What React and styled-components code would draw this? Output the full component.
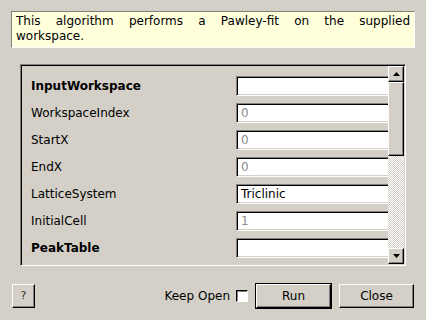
import React from "react";
import styled, { createGlobalStyle } from "styled-components";

const Global = createGlobalStyle`
  html, body { margin: 0; padding: 0; background: #d4d0c8; }
  body { font-family: "DejaVu Sans", "Liberation Sans", sans-serif; font-size: 12px; color: #000; }
  * { box-sizing: border-box; }
`;

const Dialog = styled.div`
  width: 426px;
  height: 320px;
  padding: 11px;
  display: flex;
  flex-direction: column;
  background: #d4d0c8;
`;

const Description = styled.div`
  height: 37px;
  padding: 2px 4px 0 4px;
  background: #ffffdc;
  border: 1px solid;
  border-color: #808080 #ffffff #ffffff #808080;
  line-height: 15px;
`;

const Line = styled.span`
  display: block;
  text-align: ${(p) => (p.$justify ? "justify" : "left")};
  text-align-last: ${(p) => (p.$justify ? "justify" : "auto")};
`;

const Frame = styled.div`
  margin: 16px 9px 0 9px;
  height: 203px;
  display: flex;
  border: 1px solid;
  border-color: #808080 #ffffff #ffffff #808080;
  box-shadow: inset 1px 1px #000000, inset -1px -1px #d4d0c8;
  padding: 1px;
`;

const Viewport = styled.div`
  flex: 1;
  overflow: hidden;
`;

const Grid = styled.div`
  width: 400px;
  padding: 10px 0 0 9px;
  display: grid;
  grid-template-columns: 205px 1fr;
  grid-auto-rows: 20px;
  row-gap: 7px;
  align-items: center;
`;

const Label = styled.div`
  font-weight: ${(p) => (p.$bold ? "bold" : "normal")};
  white-space: nowrap;
`;

const Field = styled.div`
  height: 20px;
  background: #fff;
  border: 1px solid;
  border-color: #808080 #ffffff #ffffff #808080;
  box-shadow: inset 1px 1px #000000, inset -1px -1px #d4d0c8;
  padding: 0 4px;
  display: flex;
  align-items: center;
  color: ${(p) => (p.$placeholder ? "#8c8c8c" : "#000")};
  white-space: nowrap;
`;

const ScrollBar = styled.div`
  width: 16px;
  display: flex;
  flex-direction: column;
  background: repeating-conic-gradient(#d4d0c8 0 25%, #ffffff 0 50%) 0 0 / 2px 2px;
`;

const Raised = styled.div`
  background: #d4d0c8;
  border: 1px solid;
  border-color: #ffffff #000000 #000000 #ffffff;
  box-shadow: inset -1px -1px #808080;
`;

const ArrowButton = styled(Raised)`
  height: 16px;
  display: flex;
  align-items: center;
  justify-content: center;
`;

const Handle = styled(Raised)`
  height: 74px;
`;

const Track = styled.div`
  flex: 1;
`;

const BottomBar = styled.div`
  margin-top: 16px;
  height: 27px;
  display: flex;
  align-items: center;
  padding: 0 1px;
`;

const PushButton = styled(Raised)`
  height: 24px;
  width: ${(p) => p.$w}px;
  margin-left: ${(p) => p.$ml || 0}px;
  display: flex;
  align-items: center;
  justify-content: center;
  color: ${(p) => (p.$muted ? "#333" : "#000")};
  font-size: ${(p) => (p.$small ? "11px" : "12px")};
`;

const DefaultRing = styled.div`
  border: 1px solid #000;
  margin-left: 7px;
  display: flex;
`;

const Spacer = styled.div`
  flex: 1;
`;

const KeepLabel = styled.span`
  margin-right: 6px;
`;

const CheckBox = styled.div`
  width: 12px;
  height: 12px;
  background: #fff;
  border: 1px solid;
  border-color: #000000 #ffffff #ffffff #000000;
  box-shadow: inset 1px 1px #808080;
`;

const Arrow = ({ up }) => (
  <svg width="7" height="4" viewBox="0 0 7 4">
    <polygon points={up ? "3.5,0 7,4 0,4" : "0,0 7,0 3.5,4"} fill="#000" />
  </svg>
);

const rows = [
  { label: "InputWorkspace", bold: true, value: "" },
  { label: "WorkspaceIndex", value: "0", ph: true },
  { label: "StartX", value: "0", ph: true },
  { label: "EndX", value: "0", ph: true },
  { label: "LatticeSystem", value: "Triclinic" },
  { label: "InitialCell", value: "1", ph: true },
  { label: "PeakTable", bold: true, value: "" },
];

export default function App() {
  return (
    <>
      <Global />
      <Dialog>
        <Description>
          <Line $justify>This algorithm performs a Pawley-fit on the supplied</Line>
          <Line>workspace.</Line>
        </Description>
        <Frame>
          <Viewport>
            <Grid>
              {rows.map((r) => (
                <React.Fragment key={r.label}>
                  <Label $bold={r.bold}>{r.label}</Label>
                  <Field $placeholder={r.ph}>{r.value}</Field>
                </React.Fragment>
              ))}
            </Grid>
          </Viewport>
          <ScrollBar>
            <ArrowButton>
              <Arrow up />
            </ArrowButton>
            <Handle />
            <Track />
            <ArrowButton>
              <Arrow />
            </ArrowButton>
          </ScrollBar>
        </Frame>
        <BottomBar>
          <PushButton $w={23} $muted $small>?</PushButton>
          <Spacer />
          <KeepLabel>Keep Open</KeepLabel>
          <CheckBox />
          <DefaultRing>
            <PushButton $w={75}>Run</PushButton>
          </DefaultRing>
          <PushButton $w={75} $ml={7}>Close</PushButton>
        </BottomBar>
      </Dialog>
    </>
  );
}
